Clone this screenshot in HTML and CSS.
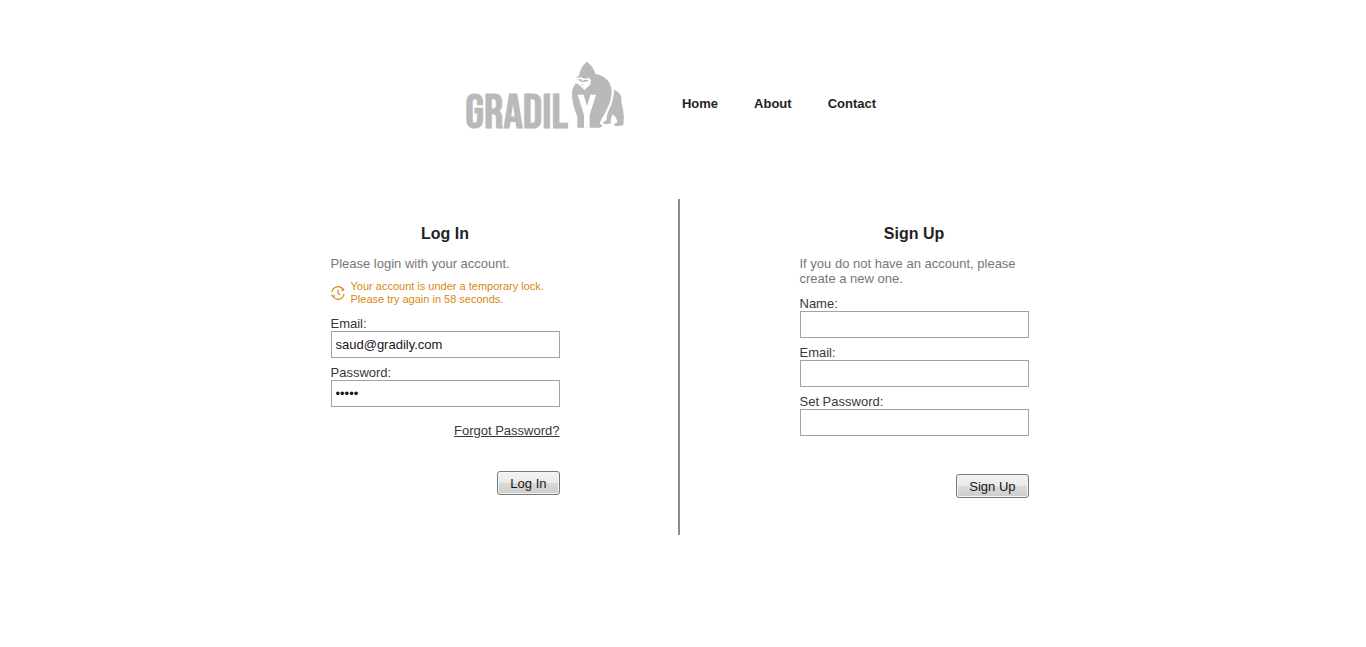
FILE: index.html
```
<!DOCTYPE html>
<html lang="en">
<head>
<meta charset="utf-8">
<meta name="viewport" content="width=device-width, initial-scale=1">
<title>Gradily</title>
<link rel="stylesheet" href="styles.css">
</head>
<body>
<header class="header">
  <a class="logo" href="#" aria-label="Gradily">
    <svg class="logo-art" viewBox="15 15 480 204" role="img" aria-label="Gradily">
      <text class="wordmark" x="16" y="215">GRADIL</text>
      <path d="M380 17 Q399 29 406 53 Q439 60 449 82 Q461 107 449 141 Q438 166 430 180 Q421 193 419 203 L427 207 Q427 214 419 215 L352 215 L352 182 Q336 145 336 115 Q335 96 347 84 L349 66 L358 57 Q360 35 380 17Z"/>
      <path d="M462 101 Q480 107 484 124 Q482 139 489 158 Q493 180 490 207 Q482 211 465 210 L462 205 L472 199 Q471 184 458 175 Q450 188 453 202 Q443 206 431 203 L430 198 L440 192 Q439 178 448 160 Q462 131 462 101Z"/>
      <path class="cut" d="M349 66 L362 64 L374 68 L387 65 L393 72 L390 87 L373 102 L358 87 L348 82Z"/>
      <path d="M352 70 L364 70 L367 76 L373 72 L386 71 L385 75 L374 78 L364 78 L358 74Z"/>
      <path d="M361 86 L371 85 L369 88Z"/>
      <path class="cut" d="M353 116 L371 116 L381 151 L391 116 L408 116 L389 177 L389 215 L372 215 L372 177Z"/>
    </svg>
  </a>
  <nav class="nav">
    <a href="#">Home</a>
    <a href="#">About</a>
    <a href="#">Contact</a>
  </nav>
</header>
<main class="panels">
  <section class="panel panel-login">
    <form class="form">
      <h2 class="title">Log In</h2>
      <p class="intro">Please login with your account.</p>
      <div class="notice" role="alert">
        <svg class="clock" viewBox="0 0 14 14" aria-hidden="true">
          <path d="M1 6A6 6 0 0 1 12.3 4M13 8A6 6 0 0 1 2 10.5M.5 8.5L2 10.5L4 9.5M10.5 4.5L12.4 4.2L12.7 2.5M7 3.8V7.2L9 8.8"/>
        </svg>
        <p class="notice-text">Your account is under a temporary lock. Please try again in 58 seconds.</p>
      </div>
      <div class="field">
        <label for="login-email">Email:</label>
        <input id="login-email" type="email" value="saud@gradily.com">
      </div>
      <div class="field">
        <label for="login-password">Password:</label>
        <input id="login-password" type="password" value="12345">
      </div>
      <a class="forgot" href="#">Forgot Password?</a>
      <button class="button" type="submit">Log In</button>
    </form>
  </section>
  <section class="panel">
    <form class="form">
      <h2 class="title">Sign Up</h2>
      <p class="intro">If you do not have an account, please create a new one.</p>
      <div class="field">
        <label for="name">Name:</label>
        <input id="name" type="text">
      </div>
      <div class="field">
        <label for="signup-email">Email:</label>
        <input id="signup-email" type="email">
      </div>
      <div class="field">
        <label for="new-password">Set Password:</label>
        <input id="new-password" type="password">
      </div>
      <button class="button button-signup" type="submit">Sign Up</button>
    </form>
  </section>
</main>
</body>
</html>
```
FILE: styles.css
```
* { box-sizing: border-box; }

body {
  margin: 0;
  padding: 61px 6px 40px 0;
  background: #fff;
  color: #231f26;
  font: 13px/15px "Liberation Sans", Arial, sans-serif;
}

h2, p { margin: 0; }

.header {
  display: flex;
  justify-content: center;
  align-items: center;
  gap: 57px;
  padding-right: 19px;
}

.logo-art {
  display: block;
  width: 160px;
  height: 68px;
  overflow: visible;
  fill: #b9b9b9;
}

.wordmark {
  font: 144px "Bebas Neue", "Oswald", "Roboto Condensed", "Liberation Sans Narrow", "Liberation Sans", sans-serif;
  stroke: #b9b9b9;
  stroke-width: 3;
}

.cut { fill: #fff; }

.nav {
  display: flex;
  gap: 36px;
  padding-top: 16px;
  font-weight: bold;
}

.nav a { color: inherit; text-decoration: none; }

.panels {
  display: flex;
  justify-content: center;
  margin-top: 70px;
}

.panel {
  display: flex;
  justify-content: center;
  flex: 0 1 468px;
  min-height: 336px;
  padding: 25px 16px 37px;
}

.panel-login { border-right: 2px solid #8c8c8c; }

.form {
  display: flex;
  flex-direction: column;
  width: 229px;
}

.title {
  margin-bottom: 12px;
  font-size: 16px;
  line-height: 20px;
  text-align: center;
}

.intro {
  margin-bottom: 10px;
  color: #777;
}

.notice {
  display: flex;
  align-items: center;
  gap: 6px;
  margin: -1px 0 10px;
  color: #d68a10;
  font-size: 11px;
  line-height: 13px;
}

.clock {
  flex: none;
  width: 14px;
  height: 14px;
  fill: none;
  stroke: currentColor;
  stroke-width: 1.2;
}

.field { margin-bottom: 7px; }

.field label { display: block; color: #3a363e; }

.field input {
  display: block;
  width: 100%;
  height: 27px;
  padding: 0 4px;
  border: 1px solid #a3a3a3;
  border-radius: 0;
  background: #fff;
  color: #19151c;
  font: inherit;
}

.forgot {
  align-self: flex-end;
  margin: 9px 0 33px;
  color: #3a363e;
}

.button {
  align-self: flex-end;
  height: 24px;
  padding: 0 12px;
  border: 1px solid #777;
  border-radius: 3px;
  background: linear-gradient(#f3f3f3, #e9e9e9 50%, #dadada 50%, #cdcdcd);
  box-shadow: inset 0 0 0 1px #f5f5f5;
  color: #19151c;
  font: inherit;
}

.button-signup { margin-top: 31px; }
```
